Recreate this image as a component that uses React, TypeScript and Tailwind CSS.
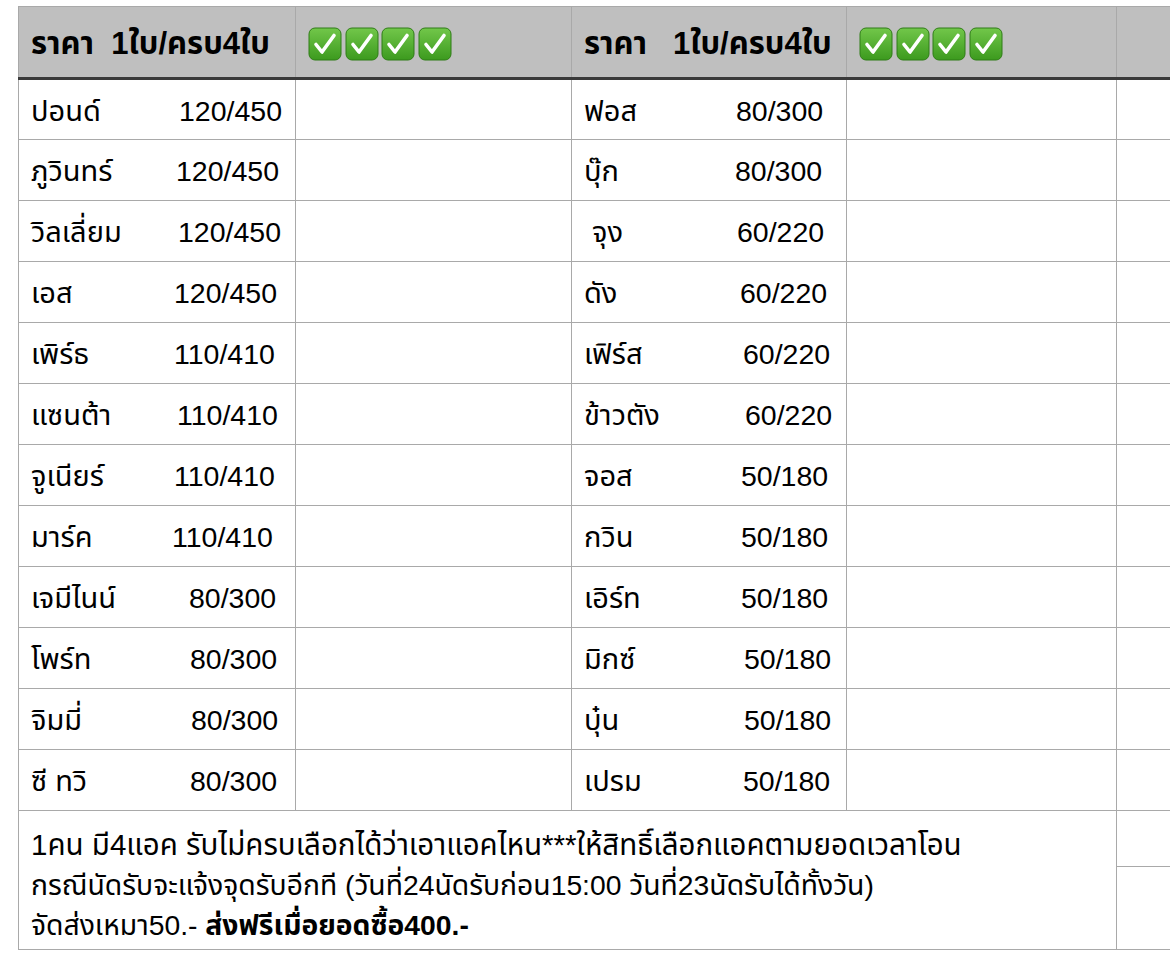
import React from "react";

interface PriceRow {
  name: string;
  price: string;
  gap: string;
}

const leftRows: PriceRow[] = [
  { name: "ปอนด์", price: "120/450", gap: "w-[148px]" },
  { name: "ภูวินทร์", price: "120/450", gap: "w-[145px]" },
  { name: "วิลเลี่ยม", price: "120/450", gap: "w-[147px]" },
  { name: "เอส", price: "120/450", gap: "w-[143px]" },
  { name: "เพิร์ธ", price: "110/410", gap: "w-[143px]" },
  { name: "แซนต้า", price: "110/410", gap: "w-[146px]" },
  { name: "จูเนียร์", price: "110/410", gap: "w-[143px]" },
  { name: "มาร์ค", price: "110/410", gap: "w-[141px]" },
  { name: "เจมีไนน์", price: "80/300", gap: "w-[158px]" },
  { name: "โพร์ท", price: "80/300", gap: "w-[159px]" },
  { name: "จิมมี่", price: "80/300", gap: "w-[160px]" },
  { name: "ซี ทวิ", price: "80/300", gap: "w-[159px]" },
];

const rightRows: PriceRow[] = [
  { name: "ฟอส", price: "80/300", gap: "w-[152px]" },
  { name: "บุ๊ก", price: "80/300", gap: "w-[151px]" },
  { name: "\u00a0จุง", price: "60/220", gap: "w-[153px]" },
  { name: "ดัง", price: "60/220", gap: "w-[156px]" },
  { name: "เฟิร์ส", price: "60/220", gap: "w-[159px]" },
  { name: "ข้าวตัง", price: "60/220", gap: "w-[161px]" },
  { name: "จอส", price: "50/180", gap: "w-[157px]" },
  { name: "กวิน", price: "50/180", gap: "w-[157px]" },
  { name: "เอิร์ท", price: "50/180", gap: "w-[157px]" },
  { name: "มิกซ์", price: "50/180", gap: "w-[160px]" },
  { name: "บุ๋น", price: "50/180", gap: "w-[160px]" },
  { name: "เปรม", price: "50/180", gap: "w-[159px]" },
];

// emoji ✅ drawn by hand, no emoji font in the sandbox
const CheckBox = () => (
  <svg width="34" height="34" viewBox="0 0 34 34" className="shrink-0">
    <defs>
      <linearGradient id="chk" x1="0" y1="0" x2="0" y2="1">
        <stop offset="0" stopColor="#72c74a" />
        <stop offset="1" stopColor="#3c9a1e" />
      </linearGradient>
    </defs>
    <rect x="1" y="1" width="32" height="32" rx="6" fill="url(#chk)" stroke="#2f7d16" strokeWidth="1" />
    <path d="M8 17.5 L14 25 L26 8.5" fill="none" stroke="#ffffff" strokeWidth="3.6" strokeLinecap="round" strokeLinejoin="round" />
  </svg>
);

const Checks = () => (
  <div className="mt-[3px] flex gap-[2.5px]">
    <CheckBox />
    <CheckBox />
    <CheckBox />
    <CheckBox />
  </div>
);

const PriceCell = ({ row }: { row: PriceRow }) => (
  <div className="flex items-baseline whitespace-nowrap pt-[4px]">
    <span className={`${row.gap} shrink-0 text-[29px]`}>{row.name}</span>
    <span className="text-[28.5px]">{row.price}</span>
  </div>
);

const cell = "border border-[#a9a9a9] px-[12px] align-middle";
const head = "border-b-[3px] border-b-[#3a3a3a]";

export default function App() {
  return (
    <div
      className="h-[961px] w-[1170px] overflow-hidden bg-white pl-[18px] pt-[6px] text-black"
      style={{ fontFamily: '"Liberation Sans", "Noto Sans Thai", "Noto Sans", sans-serif' }}
    >
      <table className="w-[1198px] table-fixed border-collapse">
        <colgroup>
          <col className="w-[277px]" />
          <col className="w-[276px]" />
          <col className="w-[275px]" />
          <col className="w-[270px]" />
          <col className="w-[100px]" />
        </colgroup>
        <thead>
          <tr className="h-[72px] bg-[#bfbfbf] text-[31px] font-bold">
            <th className={`${cell} ${head} pt-[4px] text-left whitespace-nowrap`}>
              ราคา&nbsp;&nbsp;1ใบ/ครบ4ใบ
            </th>
            <th className={`${cell} ${head} text-left`}>
              <Checks />
            </th>
            <th className={`${cell} ${head} pt-[4px] text-left whitespace-nowrap`}>
              ราคา&nbsp;&nbsp;&nbsp;1ใบ/ครบ4ใบ
            </th>
            <th className={`${cell} ${head} text-left`}>
              <Checks />
            </th>
            <th className={`${cell} ${head}`} />
          </tr>
        </thead>
        <tbody>
          {leftRows.map((row, i) => (
            <tr key={row.name} className="h-[61px]">
              <td className={cell}>
                <PriceCell row={row} />
              </td>
              <td className={cell} />
              <td className={cell}>
                <PriceCell row={rightRows[i]} />
              </td>
              <td className={cell} />
              <td className={cell} />
            </tr>
          ))}
          <tr className="h-[56px]">
            <td
              colSpan={4}
              rowSpan={2}
              className={`${cell} pt-[14px] align-top leading-[40px] whitespace-nowrap`}
            >
              <div className="text-[29.5px]">
                1คน มี4แอค รับไม่ครบเลือกได้ว่าเอาแอคไหน***ให้สิทธิ์เลือกแอคตามยอดเวลาโอน
              </div>
              <div className="text-[28.3px]">
                กรณีนัดรับจะแจ้งจุดรับอีกที (วันที่24นัดรับก่อน15:00 วันที่23นัดรับได้ทั้งวัน)
              </div>
              <div className="text-[28.3px]">
                จัดส่งเหมา50.- <span className="font-bold">ส่งฟรีเมื่อยอดซื้อ400.-</span>
              </div>
            </td>
            <td className={cell} />
          </tr>
          <tr className="h-[83px]">
            <td className={cell} />
          </tr>
        </tbody>
      </table>
    </div>
  );
}
